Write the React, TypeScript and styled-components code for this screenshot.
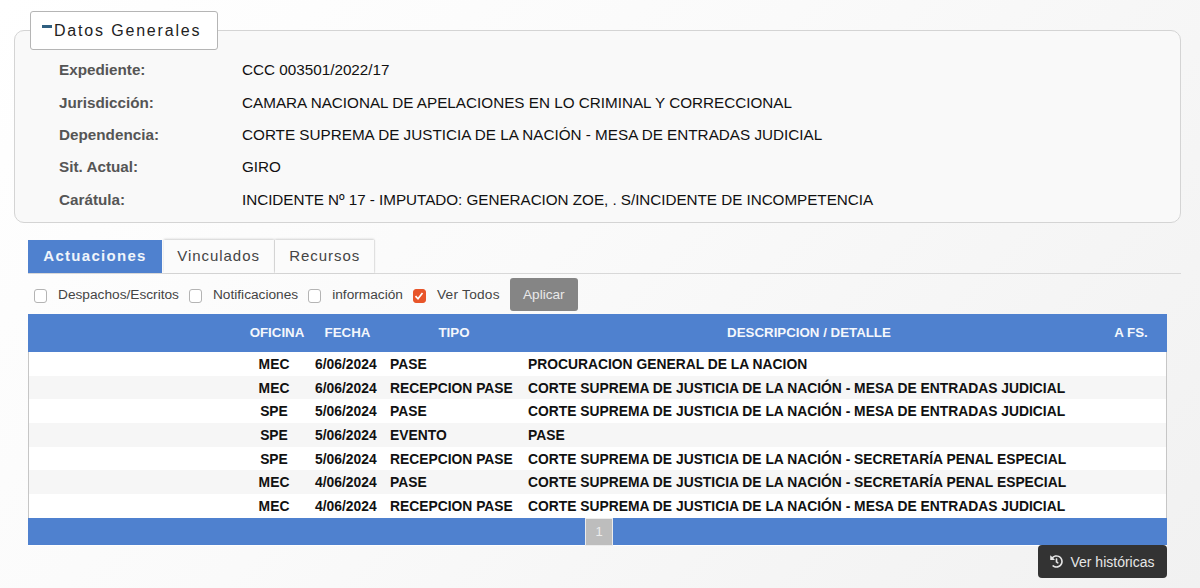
import React from "react";
import styled, { createGlobalStyle } from "styled-components";
import { FaHistory } from "react-icons/fa";

const Global = createGlobalStyle`
  html, body { margin: 0; padding: 0; }
  body {
    width: 1200px; height: 588px; overflow: hidden;
    font-family: "Liberation Sans", Arial, sans-serif;
    background: linear-gradient(135deg, #ffffff 0%, #fafafa 45%, #f1f1f1 100%);
  }
`;
const Page = styled.div`
  padding: 11px 19px 0 14px;
  display: flex;
  flex-direction: column;
`;
const Fieldset = styled.fieldset`
  margin: 0;
  padding: 0 0 5px 0;
  height: 212px;
  box-sizing: border-box;
  border: 1px solid #d4d4d4;
  border-radius: 10px;
  background: #f9f9f9;
  min-width: 0;
`;
const Legend = styled.legend`
  margin-left: 15px;
  padding: 0 0 0 11px;
  width: 188px;
  height: 39px;
  box-sizing: border-box;
  background: #fff;
  border: 1px solid #b5b5b5;
  border-radius: 3px;
  font-size: 16px;
  letter-spacing: 1.82px;
  color: #222;
  display: flex;
  align-items: center;
`;
const Minus = styled.span`
  width: 10px;
  height: 3px;
  background: #2f5f80;
  margin: 0 2px 9px 0;
  flex: none;
`;
const Rows = styled.dl`
  margin: 0;
  padding: 3.5px 0 0 44px;
  display: grid;
  grid-template-columns: 183px 1fr;
  grid-auto-rows: 32.4px;
  align-items: center;
  font-size: 15.25px;
`;
const Term = styled.dt`
  font-weight: 700;
  color: #555;
`;
const Value = styled.dd<{ $track?: number }>`
  margin: 0;
  color: #111;
  letter-spacing: ${p => p.$track ?? 0}px;
`;
const Main = styled.div`
  margin: 17px 0 0 14px;
`;
const Tabs = styled.div`
  display: flex;
  gap: 1.6px;
  height: 34px;
  box-sizing: border-box;
  border-bottom: 1px solid #d8d8d8;
`;
const Tab = styled.div<{ $active?: boolean; $w: number }>`
  width: ${p => p.$w}px;
  height: 33px;
  display: flex;
  align-items: center;
  justify-content: center;
  box-sizing: border-box;
  padding-bottom: 2px;
  font-size: 15px;
  letter-spacing: ${p => (p.$active ? "1.3px" : "0.95px")};
  font-weight: ${p => (p.$active ? 700 : 400)};
  color: ${p => (p.$active ? "#f0f5fb" : "#444")};
  background: ${p => (p.$active ? "#4f81cf" : "#fbfbfb")};
  box-shadow: ${p => (p.$active ? "none" : "0 -1px 2px rgba(0,0,0,.16), 1px 0 1px rgba(0,0,0,.06)")};
`;
const Filters = styled.div`
  display: flex;
  align-items: center;
  height: 40px;
  padding-left: 6px;
  font-size: 13.7px;
  color: #444;
`;
const Box = styled.span<{ $checked?: boolean }>`
  width: 13px;
  height: 14px;
  box-sizing: border-box;
  border-radius: 3px;
  border: 1px solid ${p => (p.$checked ? "#e8552a" : "#b4b4b4")};
  background: ${p => (p.$checked ? "#e8552a" : "#fff")};
  display: inline-flex;
  align-items: center;
  justify-content: center;
  margin: 2px 11px 0 0;
  flex: none;
`;
const Filter = styled.label<{ $gap: number; $track?: number }>`
  display: inline-flex;
  align-items: center;
  margin-right: ${p => p.$gap}px;
  padding-top: 1px;
  letter-spacing: ${p => p.$track ?? 0}px;
`;
const Apply = styled.button`
  width: 68px;
  height: 33px;
  border: 0;
  border-radius: 3px;
  background: #858585;
  color: #e9e9e9;
  font: 13.65px "Liberation Sans", Arial, sans-serif;
  padding: 0;
`;
const TableWrap = styled.div`
  width: 1139px;
  background: #fff;
`;
const Table = styled.table`
  width: 100%;
  table-layout: fixed;
  border-collapse: collapse;
  font-size: 13.85px;
  color: #111;
`;
const Head = styled.th<{ $w?: number }>`
  width: ${p => (p.$w ? p.$w + "px" : "auto")};
  height: 38px;
  padding: 0 0 2px;
  box-sizing: border-box;
  background: #4f81cf;
  color: #f4f7fc;
  font-weight: 700;
  font-size: 13.3px;
  text-align: center;
`;
const Row = styled.tr`
  height: 23.7px;
  &:nth-child(even) { background: #f6f6f6; }
`;
const Cell = styled.td<{ $center?: boolean }>`
  padding: ${p => (p.$center ? "0 6px 0 0" : "0 0 0 5px")};
  font-weight: 700;
  white-space: nowrap;
  text-align: ${p => (p.$center ? "center" : "left")};
  &:first-child { box-shadow: inset 1px 0 #c6c6c6; }
  &:last-child { box-shadow: inset -1px 0 #c6c6c6; }
`;
const Pager = styled.div`
  height: 28px;
  box-sizing: border-box;
  background: #4f81cf;
  border-bottom: 1px solid #fff;
  display: flex;
  justify-content: center;
  padding-left: 3px;
`;
const Page1 = styled.span`
  width: 28px;
  height: 28px;
  box-sizing: border-box;
  background: #bdbdbd;
  border: 1px solid #ececec;
  color: #ececec;
  font-size: 13px;
  display: flex;
  align-items: center;
  justify-content: center;
`;
const Footer = styled.div`
  display: flex;
  justify-content: flex-end;
  width: 1139px;
`;
const Historic = styled.button`
  width: 129px;
  height: 33px;
  margin-top: -1px;
  border: 0;
  border-radius: 4px;
  background: #333;
  color: #e6e6e6;
  font: 14px "Liberation Sans", Arial, sans-serif;
  display: flex;
  align-items: center;
  justify-content: center;
  gap: 7px;
  padding: 1px 0 0;
`;

const general: [string, string, number?][] = [
  ["Expediente:", "CCC 003501/2022/17"],
  ["Jurisdicción:", "CAMARA NACIONAL DE APELACIONES EN LO CRIMINAL Y CORRECCIONAL"],
  ["Dependencia:", "CORTE SUPREMA DE JUSTICIA DE LA NACIÓN - MESA DE ENTRADAS JUDICIAL"],
  ["Sit. Actual:", "GIRO"],
  ["Carátula:", "INCIDENTE Nº 17 - IMPUTADO: GENERACION ZOE, . S/INCIDENTE DE INCOMPETENCIA", -0.04],
];
const MESA = "CORTE SUPREMA DE JUSTICIA DE LA NACIÓN - MESA DE ENTRADAS JUDICIAL";
const PENAL = "CORTE SUPREMA DE JUSTICIA DE LA NACIÓN - SECRETARÍA PENAL ESPECIAL";
const rows = [
  ["MEC", "6/06/2024", "PASE", "PROCURACION GENERAL DE LA NACION"],
  ["MEC", "6/06/2024", "RECEPCION PASE", MESA],
  ["SPE", "5/06/2024", "PASE", MESA],
  ["SPE", "5/06/2024", "EVENTO", "PASE"],
  ["SPE", "5/06/2024", "RECEPCION PASE", PENAL],
  ["MEC", "4/06/2024", "PASE", PENAL],
  ["MEC", "4/06/2024", "RECEPCION PASE", MESA],
];
const filters = [
  { label: "Despachos/Escritos", gap: 10 },
  { label: "Notificaciones", gap: 10 },
  { label: "información", gap: 10 },
  { label: "Ver Todos", gap: 10, checked: true, track: 0.25 },
];

export default function App() {
  return (
    <Page>
      <Global />
      <Fieldset>
        <Legend><Minus />Datos Generales</Legend>
        <Rows>
          {general.map(([k, v, t]) => (
            <React.Fragment key={k}>
              <Term>{k}</Term>
              <Value $track={t}>{v}</Value>
            </React.Fragment>
          ))}
        </Rows>
      </Fieldset>
      <Main>
        <Tabs>
          <Tab $active $w={134}>Actuaciones</Tab>
          <Tab $w={110}>Vinculados</Tab>
          <Tab $w={99}>Recursos</Tab>
        </Tabs>
        <Filters>
          {filters.map(f => (
            <Filter key={f.label} $gap={f.gap} $track={f.track}>
              <Box $checked={f.checked}>
                {f.checked && (
                  <svg width="10" height="10" viewBox="0 0 10 10" fill="none" stroke="#fff" strokeWidth="1.7">
                    <path d="M1.5 5.2 4 7.8 8.5 2" />
                  </svg>
                )}
              </Box>
              {f.label}
            </Filter>
          ))}
          <Apply>Aplicar</Apply>
        </Filters>
        <TableWrap>
          <Table>
            <thead>
              <tr>
                <Head $w={216} />
                <Head $w={66}>OFICINA</Head>
                <Head $w={75}>FECHA</Head>
                <Head $w={138}>TIPO</Head>
                <Head $w={572}>DESCRIPCION / DETALLE</Head>
                <Head>A FS.</Head>
              </tr>
            </thead>
            <tbody>
              {rows.map((r, i) => (
                <Row key={i}>
                  <Cell />
                  <Cell $center>{r[0]}</Cell>
                  <Cell>{r[1]}</Cell>
                  <Cell>{r[2]}</Cell>
                  <Cell>{r[3]}</Cell>
                  <Cell />
                </Row>
              ))}
            </tbody>
          </Table>
          <Pager><Page1>1</Page1></Pager>
        </TableWrap>
        <Footer>
          <Historic>
            <FaHistory size={13} color="#e6e6e6" />
            Ver históricas
          </Historic>
        </Footer>
      </Main>
    </Page>
  );
}
